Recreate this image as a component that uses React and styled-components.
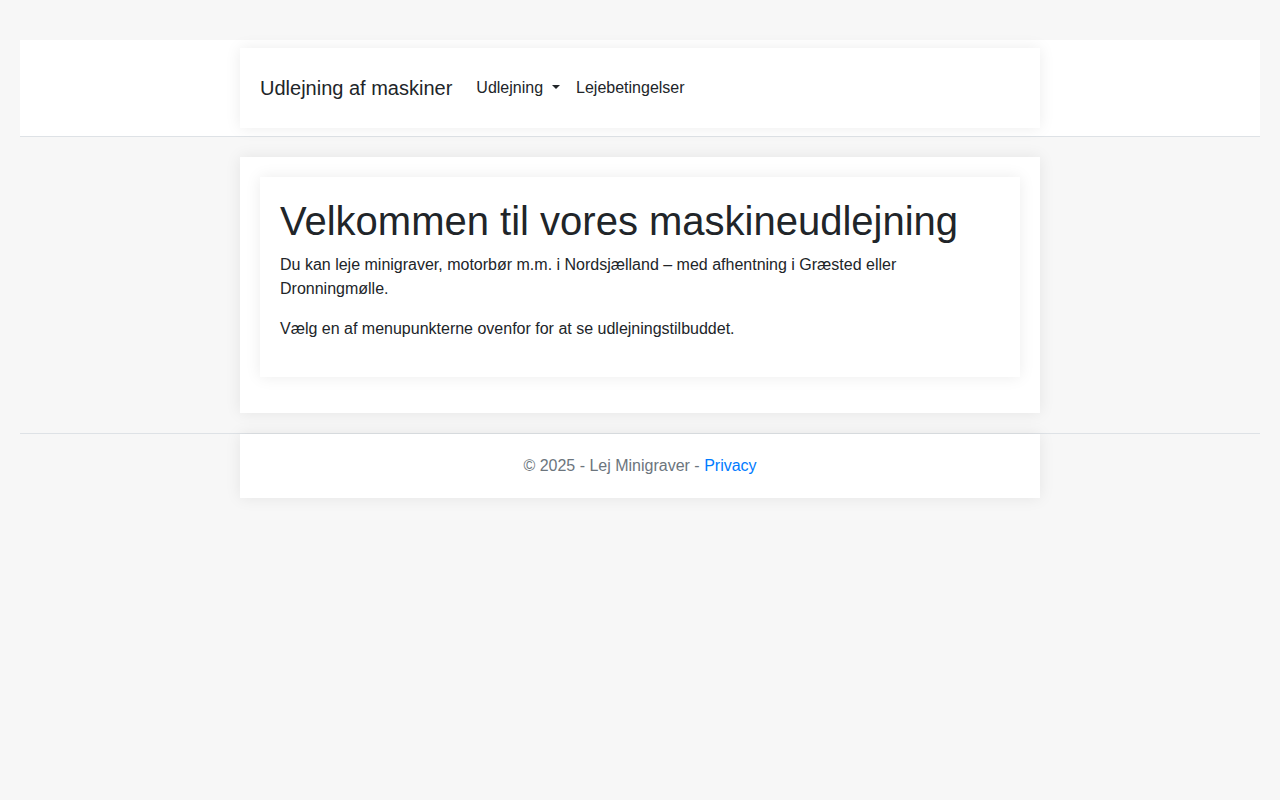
import styled, { createGlobalStyle } from "styled-components";

const GlobalStyle = createGlobalStyle`
  html, body {
    margin: 0;
    padding: 0;
    background: #f7f7f7;
    font-family: "Liberation Sans", Arial, sans-serif;
    font-size: 16px;
    line-height: 1.5;
    color: #212529;
  }
  * { box-sizing: border-box; }
`;

const App = () => {
  return (
    <Page>
      <GlobalStyle />
      <HeaderBand>
        <Card>
          <Nav>
            <Brand href="#">Udlejning af maskiner</Brand>
            <NavLinks>
              <NavLink href="#" $toggle>Udlejning</NavLink>
              <NavLink href="#">Lejebetingelser</NavLink>
            </NavLinks>
          </Nav>
        </Card>
      </HeaderBand>

      <Main>
        <Card>
          <InnerCard>
            <Title>Velkommen til vores maskineudlejning</Title>
            <Text>
              Du kan leje minigraver, motorbør m.m. i Nordsjælland – med afhentning i Græsted eller
              Dronningmølle.
            </Text>
            <Text>Vælg en af menupunkterne ovenfor for at se udlejningstilbuddet.</Text>
          </InnerCard>
        </Card>
      </Main>

      <FooterBand>
        <Card>
          <FooterText>
            © 2025 - Lej Minigraver - <FooterLink href="#">Privacy</FooterLink>
          </FooterText>
        </Card>
      </FooterBand>
    </Page>
  );
};

const Page = styled.div`
  padding: 40px 20px;
`;

const HeaderBand = styled.header`
  background: #ffffff;
  padding: 8px 0;
  border-bottom: 1px solid #dee2e6;
`;

const Card = styled.div`
  width: 800px;
  margin: 0 auto;
  background: #ffffff;
  padding: 20px;
  box-shadow: 0 0 15px rgba(0, 0, 0, 0.08);
`;

const Nav = styled.nav`
  display: flex;
  align-items: center;
  height: 40px;
`;

const Brand = styled.a`
  font-size: 20px;
  line-height: 30px;
  padding: 5px 0;
  margin-right: 16px;
  color: #212529;
  text-decoration: none;
`;

const NavLinks = styled.div`
  display: flex;
  align-items: center;
`;

const NavLink = styled.a`
  padding: 8px;
  color: #212529;
  text-decoration: none;
  font-size: 16px;
  line-height: 24px;

  &::after {
    ${(p) => (p.$toggle ? "content: '';" : "content: none;")}
    display: inline-block;
    margin-left: 9px;
    vertical-align: 4px;
    border-top: 4.5px solid;
    border-right: 4.5px solid transparent;
    border-left: 4.5px solid transparent;
    border-bottom: 0;
  }
`;

const Main = styled.main`
  margin: 20px 0;
`;

const InnerCard = styled.section`
  background: #ffffff;
  padding: 20px;
  margin-bottom: 16px;
  box-shadow: 0 0 15px rgba(0, 0, 0, 0.08);
`;

const Title = styled.h1`
  margin: 0 0 8px;
  font-size: 40px;
  font-weight: 500;
  line-height: 1.2;
  color: #212529;
`;

const Text = styled.p`
  margin: 0 0 16px;
`;

const FooterBand = styled.footer`
  border-top: 1px solid #dee2e6;
`;

const FooterText = styled.div`
  text-align: center;
  color: #6c757d;
`;

const FooterLink = styled.a`
  color: #007bff;
  text-decoration: none;
`;

export default App;
